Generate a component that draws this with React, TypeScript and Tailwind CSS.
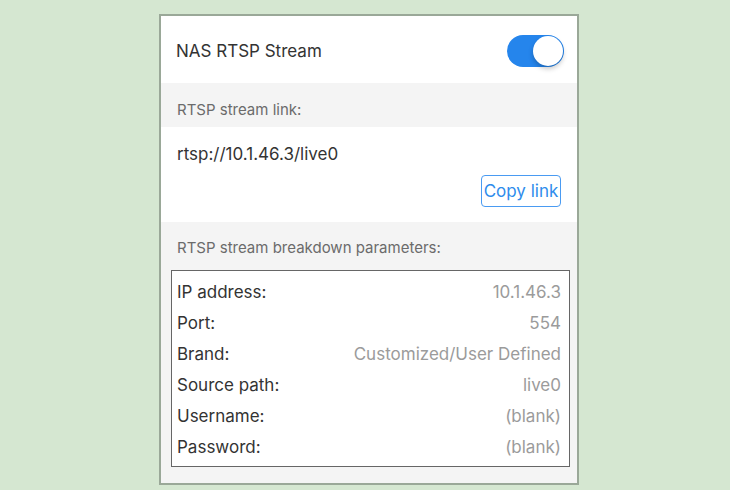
import React from "react";

const rows: [string, string][] = [
  ["IP address:", "10.1.46.3"],
  ["Port:", "554"],
  ["Brand:", "Customized/User Defined"],
  ["Source path:", "live0"],
  ["Username:", "(blank)"],
  ["Password:", "(blank)"],
];

export default function App() {
  return (
    <div
      className="w-[730px] h-[490px] bg-[#d5e7d1] pt-[14px] pl-[159px] overflow-hidden"
      style={{ fontFamily: "Inter, 'Liberation Sans', sans-serif" }}
    >
      <div className="w-[420px] h-[471px] border-2 border-[#9aa898] bg-white flex flex-col">
        <div className="h-[67px] flex items-center justify-between pl-[15px] pr-[13px] pt-[2px]">
          <div className="text-[17px] leading-[20px] text-[#333]">NAS RTSP Stream</div>
          <div className="w-[57px] h-[32px] rounded-full bg-[#2585ec] flex justify-end items-center p-[1px]">
            <div className="w-[30px] h-[30px] rounded-full bg-white shadow-[0_3px_5px_rgba(0,0,0,0.22)]" />
          </div>
        </div>
        <div className="h-[44px] bg-[#f4f4f4] pl-[16px] pt-[18px] text-[15px] leading-[18px] text-[#6b6b6b]">
          RTSP stream link:
        </div>
        <div className="h-[95px] flex flex-col pt-[17px] pl-[16px] pr-[16px]">
          <div className="text-[17px] leading-[20px] text-[#333]">rtsp://10.1.46.3/live0</div>
          <div className="flex justify-end mt-[11px]">
            <button className="w-[80px] h-[32px] border border-[#4a9bf2] rounded-[4px] text-[17px] leading-[20px] text-[#2e8cec] bg-white">
              Copy link
            </button>
          </div>
        </div>
        <div className="flex-1 bg-[#f4f4f4] flex flex-col">
          <div className="pl-[16px] pt-[17px] text-[15px] leading-[18px] text-[#6b6b6b]">
            RTSP stream breakdown parameters:
          </div>
          <div className="mt-[13px] ml-[10px] mr-[7px] h-[197px] border border-[#666] bg-white pt-[5px] pb-[4px] pl-[5px] pr-[8px]">
            {rows.map(([k, v]) => (
              <div key={k} className="h-[31px] flex items-center justify-between text-[17px] leading-[20px]">
                <span className="text-[#333]">{k}</span>
                <span className="text-[#9b9b9b]">{v}</span>
              </div>
            ))}
          </div>
        </div>
      </div>
    </div>
  );
}
